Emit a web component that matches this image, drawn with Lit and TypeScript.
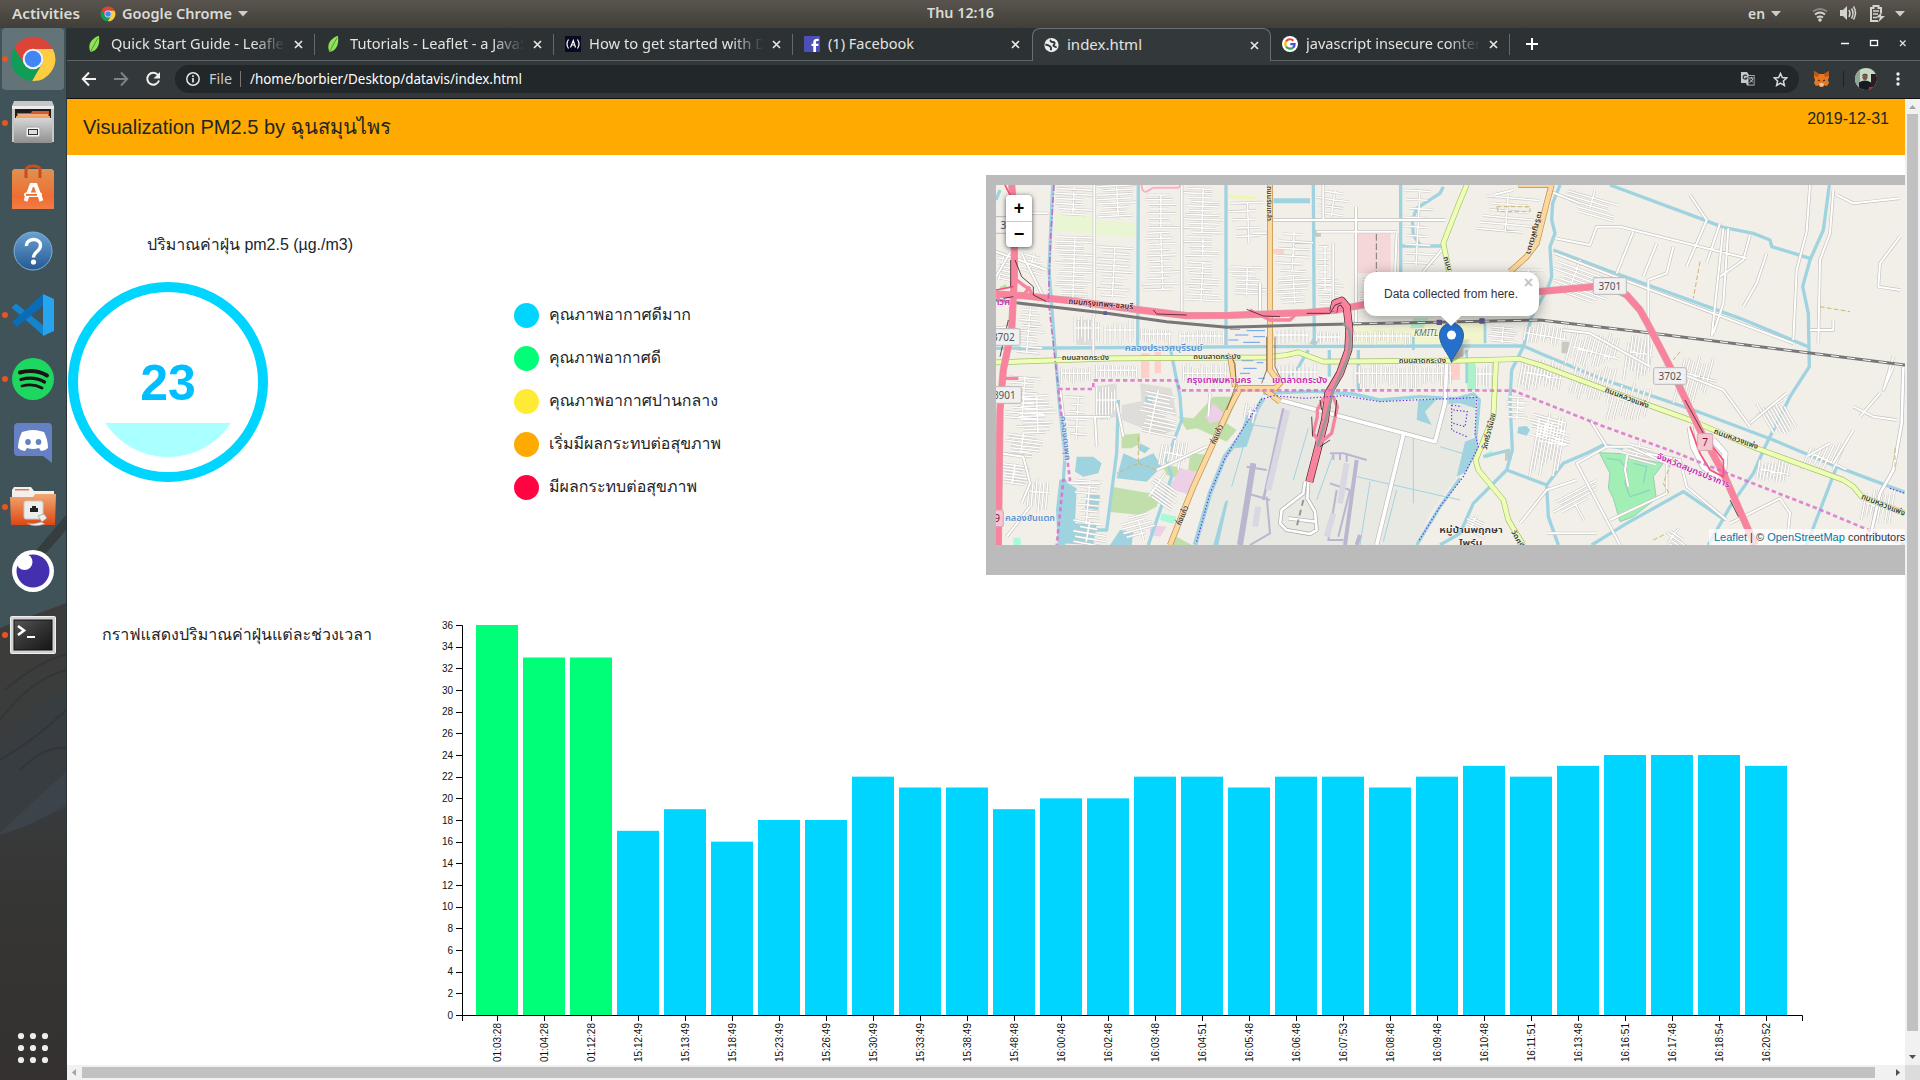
import { LitElement, html, svg, css } from "lit";
import { customElement } from "lit/decorators.js";

/* Text drawn on one line at a fixed advance width. */
const UI = "'Noto Sans','Open Sans',sans-serif";
const fit = (t: string, w: number, size: number, fill = "#e3e3e0", weight = 400, family = UI, h = 20, base = 15) => html`
  <svg width=${w} height=${h} style="display:block;overflow:visible;flex:none">
    <text x="0" y=${base} textLength=${w} lengthAdjust="spacingAndGlyphs" font-size=${size} fill=${fill} font-weight=${weight} font-family=${family}>${t}</text>
  </svg>`;
const THAI = "'Liberation Sans','Loma','Noto Sans Thai',sans-serif";

const chromeLogo = (s: number) => html`<svg width=${s} height=${s} viewBox="0 0 48 48">
  <path fill="#db4437" d="M24 14H43.8A22 22 0 0 0 5 12.8L15.3 29A10 10 0 0 1 24 14z"/>
  <path fill="#ffcd40" d="M24 14H43.8A22 22 0 0 1 23 46L32.7 29A10 10 0 0 0 24 14z"/>
  <path fill="#0f9d58" d="M5 12.8A22 22 0 0 0 23 46L32.7 29A10 10 0 0 1 15.3 29z"/>
  <circle cx="24" cy="24" r="10.3" fill="#f4f4f4"/><circle cx="24" cy="24" r="8.3" fill="#4285f4"/></svg>`;

const leaf = html`<svg width="16" height="18" viewBox="0 0 16 18"><path d="M11.800 .8C3.500 4 .5 10 3.500 17c7-1 10-8 8.300-16.200z" fill="#8fe257"/><path d="M11 3C8 8 6 12 3.500 17" stroke="#4d9c2b" fill="none"/></svg>`;
const fcc = html`<svg width="16" height="16" viewBox="0 0 16 16"><rect width="16" height="16" fill="#0a0a23"/><path d="M3.500 3.500Q0.500 8 3.500 12.500M12.500 3.500Q15.500 8 12.500 12.500M5.500 11.500L8.300 4.500L10.500 11.500M6.700 9h2.500" stroke="#fff" stroke-width="1.200" fill="none"/></svg>`;
const fb = html`<svg width="16" height="16" viewBox="0 0 16 16"><rect width="16" height="16" fill="#4c4fb3"/><path d="M12 16V10h2.200l.4-2.300H12V6.300c0-.9.4-1.400 1.400-1.400h1.300V2.800C12 2.300 9.300 3 9.300 5.900v1.800H7.500V10h1.800v6z" fill="#fff"/></svg>`;
const globe = html`<svg width="15" height="16" viewBox="0 0 16 16"><circle cx="8" cy="8" r="7.600" fill="#eee"/><path d="M7.500 2.500C6 4 8 5 9.500 4.800c1.500 0 2.500 1 1.500 2.200S9.500 9 11 9.500s2 .5 1.500 1.500M1.500 7.500C4 8 5.500 8.500 6.500 9.500S8 12 7 13.500" fill="none" stroke="#33393b" stroke-width="2"/></svg>`;
const google = html`<svg width="16" height="16" viewBox="0 0 16 16"><circle cx="8" cy="8" r="8" fill="#fff"/><g fill="none" stroke-width="2.200"><path d="M4 5.500A4.700 4.700 0 0 1 11.400 4.700" stroke="#ea4335"/><path d="M4 5.500A4.700 4.700 0 0 0 4 10.500" stroke="#fbbc05"/><path d="M4 10.500A4.700 4.700 0 0 0 11 11.600" stroke="#34a853"/><path d="M11 11.600A4.500 4.500 0 0 0 12.600 8.200H8.300" stroke="#4c50d8"/></g></svg>`;
const closeX = html`<svg class="x" width="9" height="9" viewBox="0 0 9 9"><path d="M1 1l7 7M8 1L1 8" stroke="#e6e6e3" stroke-width="1.700"/></svg>`;

const DOCK = [
  { run: true, active: true, icon: chromeLogo(48) },
  { run: true, icon: html`<svg width="46" height="48" viewBox="0 0 46 48"><defs><linearGradient id="fg" x2="0" y2="1"><stop stop-color="#d6d6d6"/><stop offset="1" stop-color="#8f8f8f"/></linearGradient></defs>
    <path d="M4 2h38l2 5v36H2V7z" fill="#c7c7c7"/><path d="M2 7h42v3H2z" fill="#ededed"/><rect x="5" y="10" width="36" height="10" fill="#1d1d1d"/><path d="M7 14h14l1-2h17v9H7z" fill="#d55c26"/><path d="M6 17h34v4H6z" fill="#f4a35f"/><path d="M8 15.500h30v1H8z" fill="#fff"/><path d="M4 19h38v25H4z" fill="url(#fg)"/><rect x="16" y="28" width="14" height="10" rx="2" fill="#f2f2f2" stroke="#aaa"/><rect x="18.500" y="30.500" width="9" height="5" fill="#ddd" stroke="#333"/></svg>` },
  { icon: html`<svg width="44" height="46" viewBox="0 0 44 46"><defs><linearGradient id="sg" x2="0" y2="1"><stop stop-color="#df9152"/><stop offset=".7" stop-color="#f06d31"/><stop offset="1" stop-color="#f37c46"/></linearGradient></defs>
    <path d="M1 7l2-2h38l2 2v38H1z" fill="url(#sg)"/><path d="M15 14V6q0-4 7-4t7 4v8" fill="none" stroke="#cc4c1c" stroke-width="3"/><path d="M14.500 37L20.500 21h4l6 16" fill="none" stroke="#fff" stroke-width="4"/><rect x="13" y="28.500" width="18" height="4.500" rx="2" fill="#fff"/><rect x="15" y="30" width="11" height="1.800" fill="#ee6b2e"/></svg>` },
  { icon: html`<svg width="42" height="42" viewBox="0 0 42 42"><defs><linearGradient id="hg" x2="0" y2="1"><stop stop-color="#6ba0d3"/><stop offset="1" stop-color="#235a91"/></linearGradient></defs><circle cx="21" cy="21" r="19" fill="url(#hg)" stroke="#7fb0dc"/><path d="M14.500 16c-1-8 14-9 14-.5 0 6-7 6-7 12" fill="none" stroke="#fff" stroke-width="3.400"/><circle cx="21.500" cy="32" r="2.600" fill="#fff"/></svg>` },
  { run: true, icon: html`<svg width="42" height="42" viewBox="0 0 42 42"><path d="M0 13l4-3.500 28 22.500v10L0 14z" fill="#1385cf"/><path d="M0 28L31 0 32 11 5 33z" fill="#0b6bb5"/><path d="M31 0l11 5v32l-11 5z" fill="#27a4ee"/></svg>` },
  { run: true, icon: html`<svg width="42" height="42" viewBox="0 0 42 42"><circle cx="21" cy="21" r="21" fill="#1ed760"/><g fill="none" stroke="#191414" stroke-linecap="round"><path d="M8 14.500q15-4 27 3" stroke-width="4"/><path d="M9 21.500q13-3.500 23.500 2.500" stroke-width="3.300"/><path d="M10 28q11-3 20 2" stroke-width="2.800"/></g></svg>` },
  { icon: html`<svg width="38" height="42" viewBox="0 0 38 42"><path d="M4 1h30q4 0 4 4v36l-9-7H4q-4 0-4-4V5q0-4 4-4z" fill="#6680c4"/><path d="M12 9q7-2 14 0l4 1q4 8 4 16-3 3-7 3l-2-3q-6 2-12 0l-2 3q-4 0-7-3 0-8 4-16z" fill="#fff"/><ellipse cx="14" cy="20" rx="2.800" ry="3" fill="#6680c4"/><ellipse cx="24.500" cy="20" rx="2.800" ry="3" fill="#6680c4"/></svg>` },
  { run: true, icon: html`<svg width="46" height="42" viewBox="0 0 46 42"><defs><linearGradient id="dg" x2="0" y2="1"><stop stop-color="#f2a873"/><stop offset="1" stop-color="#dd4814"/></linearGradient></defs><path d="M2 4l2-3h17l3 4h20v20H2z" fill="#f3efec"/><path d="M5 3h14v1.500H5z" fill="#e07a45"/><path d="M0 11h23l2-3h21l-1 31H1z" fill="url(#dg)"/><rect x="14" y="15" width="19" height="18" rx="2" fill="#ededeb" stroke="#c9c9c9"/><path d="M20 26v-4h2v-2h4v2h2v4z" fill="#222"/><path d="M28 30l6-2 3 4-5 4zM31 36q-8 3-14 1 6 5 18 1" fill="#eee" stroke="#999" stroke-width=".7"/></svg>` },
  { icon: html`<svg width="42" height="42" viewBox="0 0 42 42"><circle cx="21" cy="21" r="21" fill="#fff"/><circle cx="21" cy="21" r="16.500" fill="#442fae"/><circle cx="12.500" cy="12" r="8" fill="#fff"/></svg>` },
  { run: true, icon: html`<svg width="46" height="38" viewBox="0 0 46 38"><defs><linearGradient id="tg" x2="1" y2="1"><stop stop-color="#555"/><stop offset=".5" stop-color="#333"/><stop offset="1" stop-color="#151515"/></linearGradient></defs><rect x=".5" y=".5" width="45" height="37" rx="1" fill="#d2d2d2" stroke="#eee"/><rect x="4" y="4" width="38" height="30" fill="url(#tg)" stroke="#111"/><path d="M8 10l6 4.500-6 4.500" fill="none" stroke="#fff" stroke-width="2.600"/><path d="M17 21h8" stroke="#fff" stroke-width="2"/></svg>` },
];

/* Readings: [time, value] */
const DATA: [string, number][] = [
  ["01:03:28", 36], ["01:04:28", 33], ["01:12:28", 33], ["15:12:49", 17], ["15:13:49", 19], ["15:18:49", 16], ["15:23:49", 18],
  ["15:26:49", 18], ["15:30:49", 22], ["15:33:49", 21], ["15:38:49", 21], ["15:48:48", 19], ["16:00:48", 20], ["16:02:48", 20],
  ["16:03:48", 22], ["16:04:51", 22], ["16:05:48", 21], ["16:06:48", 22], ["16:07:53", 22], ["16:08:48", 21], ["16:09:48", 22],
  ["16:10:48", 23], ["16:11:51", 22], ["16:13:48", 23], ["16:16:51", 24], ["16:17:48", 24], ["16:18:54", 24], ["16:20:52", 23],
];
const LEGEND: [string, string, number][] = [
  ["#00d5ff", "คุณภาพอากาศดีมาก", 142], ["#00ff78", "คุณภาพอากาศดี", 112], ["#ffeb33", "คุณภาพอากาศปานกลาง", 169],
  ["#ffaa00", "เริ่มมีผลกระทบต่อสุขภาพ", 172], ["#ff0440", "มีผลกระทบต่อสุขภาพ", 148],
];

/* Blocks of side streets: x, y, width, height, angle, spacing */
type Block = [number, number, number, number, number, number];
const STREETS: Block[] = [
  [225, 55, 115, 75, 3, 15], [350, 50, 120, 95, -3, 13], [485, 75, 115, 100, 0, 14], [610, 55, 120, 130, 2, 13], [225, 200, 120, 185, 2, 13],
  [350, 230, 110, 150, 3, 18], [485, 190, 115, 170, -2, 17], [610, 200, 118, 60, 1, 14], [610, 275, 118, 120, 3, 16], [745, 100, 115, 120, -2, 25], [745, 290, 115, 90, 2, 13],
  [885, 190, 115, 110, 3, 22], [885, 320, 110, 80, -3, 13], [1010, 60, 110, 80, 8, 22], [1010, 230, 50, 130, 0, 19], [1010, 330, 90, 70, 3, 14],
  [50, 250, 45, 80, 12, 12], [125, 250, 75, 60, 15, 16], [110, 400, 85, 150, 5, 16], [285, 440, 75, 85, 90, 10], [375, 450, 90, 75, 90, 15],
  [485, 470, 90, 55, 90, 12], [600, 480, 130, 45, 90, 13], [245, 590, 90, 50, 90, 12], [350, 585, 120, 40, 90, 12], [610, 580, 130, 75, 90, 14],
  [885, 475, 100, 50, 90, 12], [1010, 485, 70, 40, 90, 11], [885, 580, 130, 65, 90, 12], [1125, 580, 290, 75, 90, 13], [1120, 480, 170, 45, 90, 13],
  [1135, 330, 110, 70, -3, 14], [1270, 60, 100, 230, 3, 27],
  [75, 620, 120, 120, 4, 15], [110, 680, 120, 110, -2, 10], [70, 790, 120, 60, 7, 10], [60, 880, 90, 60, 8, 9], [150, 920, 60, 110, 95, 11],
  [255, 680, 80, 130, 3, 22], [350, 650, 60, 100, 90, 9], [480, 660, 110, 130, 12, 12], [550, 810, 80, 90, 100, 12], [510, 910, 90, 70, 35, 11], [285, 930, 90, 130, 5, 18],
  [280, 1050, 100, 65, 10, 16], [425, 1050, 100, 60, -15, 14], [800, 700, 30, 60, 100, 14],
  [1755, 60, 180, 55, 16, 13], [1490, 75, 190, 110, 5, 20], [1720, 270, 160, 90, 20, 12], [1590, 300, 110, 60, 0, 9], [1640, 460, 120, 70, 100, 12], [1780, 490, 140, 100, 105, 14],
  [1950, 490, 70, 140, 98, 10], [2120, 550, 90, 150, 105, 14], [1630, 570, 120, 90, 100, 10], [1790, 590, 120, 110, 105, 15], [1910, 640, 110, 110, 105, 18],
  [1680, 740, 80, 180, 100, 10], [1650, 730, 120, 70, 15, 9], [1490, 580, 65, 80, 90, 10], [1520, 470, 100, 50, 5, 13], [2330, 700, 80, 90, 60, 11],
  [2340, 870, 90, 70, 100, 10], [1720, 1000, 130, 50, -28, 13], [1455, 1035, 70, 45, 25, 8], [2500, 820, 100, 80, 115, 16], [2660, 960, 90, 100, 100, 12],
  [2060, 1075, 70, 45, 35, 13], [1920, 815, 120, 45, 15, 10], [1580, 680, 70, 70, 4, 15],
];
const streetPath = (b: Block) => {
  const [x, y, w, h, a, s] = b, vert = a > 45;
  let d = "", k = 1;
  const slope = Math.tan(((vert ? a - 90 : a) * Math.PI) / 180);
  const span = vert ? w : h, len = vert ? h : w;
  for (let i = 0; i <= span; i += s) {
    k = (k * 37 + 11 + x) % 101;
    const l0 = (k % 5) * len * 0.05, l1 = len * (0.72 + (k % 4) * 0.09);
    d += vert ? `M${x + i - slope * l0} ${y + l0}L${x + i - slope * l1} ${y + l1}` : `M${x + l0} ${y + i + slope * l0}L${x + l1} ${y + i + slope * l1}`;
  }
  d += vert ? `M${x} ${y + h * 0.4}l${w} ${slope * w}` : `M${x + w * 0.5} ${y}l${-slope * h} ${h}`;
  return d;
};
const SIDE_STREETS = STREETS.map(streetPath).join("");
const MAJOR_STREETS = "M343 45V440M605 45V445M1128 110V470M880 150H1395M1010 185H1250M125 250L200 400M95 240L48 320M1030 45V150M340 440V570M840 340V440M1060 220V390M820 190H860M48 245L200 300M240 655L250 740H390M690 670L685 740M125 1000L150 940L130 860L60 850M270 940H360M350 830L345 740M430 800L410 700M680 830L530 900M1540 75L1600 60M1725 205L1830 225L1850 170L1920 170L2300 265M1960 185L1910 310M2030 220L1990 320M2080 230L2060 310L2005 330V590M2230 175L2195 500M2245 175L2230 400L2200 490M2310 195L2290 270L2220 320M2360 250L2330 340L2290 410M2130 75L2180 150L2120 290M2220 160L2180 280M2490 45L2480 185L2450 300L2440 510M2560 60L2550 190L2520 270L2515 520M2570 75L2620 100L2760 85M2760 200L2700 280L2695 350L2760 360M1700 60L1800 100M1750 480L1830 490L2010 590M2050 590L2230 660L2310 770M2420 670L2310 760M2560 450V480H2490M2740 560L2710 660L2740 590M2640 740L2700 670M2620 710L2680 740L2750 750M1830 750L1880 830L1790 880L1920 1125M1880 830L1950 830L2060 880L2060 970L1890 1050M2000 850L2100 870L2120 950L2240 1050M1620 1060L1700 960L1790 930M1700 1090L1850 1090M2250 1060L2400 985L2430 1030L2420 1125M2480 860L2550 820M2560 880L2620 780M48 475L90 470M130 130H205M80 1100L150 1010M1725 250L1880 310L2200 430L2440 520M1385 240L1330 305M1250 190L1245 310";

const lbl = (t: string, x: number, y: number, w: number, rot: number, fill: string, size = 24) => svg`
  <text transform="translate(${x} ${y}) rotate(${rot})" textLength=${w} lengthAdjust="spacingAndGlyphs" font-size=${size} font-weight="600" fill=${fill}
    stroke="#fff" stroke-opacity=".6" stroke-width="3" paint-order="stroke" font-family="'Noto Sans Thai','Noto Sans',sans-serif">${t}</text>`;
const shield = (t: string, x: number, y: number, w: number, red = false) => svg`
  <rect x=${x} y=${y} width=${w} height="50" rx="5" fill=${red ? "#f3c6d0" : "#f0f0f0"} stroke=${red ? "#dfa1b0" : "#b9b9b9"} stroke-width="3"/>
  <text x=${x + w / 2} y=${y + 36} text-anchor="middle" font-size="30" font-family="'Noto Sans',sans-serif" fill=${red ? "#8b0a3a" : "#555"}>${t}</text>`;
const road = (d: string, fill: string, edge: string, w: number) => svg`<path d=${d} stroke=${edge} stroke-width=${w + 4}/><path d=${d} stroke=${fill} stroke-width=${w}/>`;

const mapArt = html`<svg class="tiles" width="909" height="360" viewBox="48 45 2727 1080">
  <rect x="48" y="45" width="2727" height="1080" fill="#f2efe9"/>
  <path d="M225 130L340 140V190L225 185zM345 150L470 160V202L345 195z" fill="#e9f5d3"/><path d="M745 75L830 80V87L745 84z" fill="#eef7a8"/>
  <path d="M1132 188H1232V310H1132z" fill="#f5d7d8"/><path d="M1189 192V310" stroke="#777" stroke-width="3" stroke-dasharray="20 8"/>
  <path d="M345 650L410 640V740L360 750zM425 705L500 690L590 780L540 795L425 750zM480 640L575 655L590 740L485 700zM290 450H335V525H290z" fill="#dfddd9"/>
  <path d="M483 550H508V625H483zM524 545H543V610H524zM877 237H912V251H877zM1410 583H1440V630H1410zM1427 575H1437V600H1427z" fill="#ffcfca"/>
  <path d="M1125 470H1290V523H1125zM1290 462H1510V523H1290z" fill="#f2f5cc"/><path d="M1300 445H1345L1330 475H1290z" fill="#b7eccc"/>
  <path d="M1462 580H1487V660H1462z" fill="#abf2cb"/>
  <path d="M1000 500l18 10-10 16-20-4zM1005 180h18v20h-18zM1575 845h20v22l-20 6zM1745 515h22v35h-22zM1410 530h40v32h-40z" fill="#cbc8c4"/>
  <path d="M840 690L970 672L1110 682L1200 697L1320 688H1490L1480 790L1425 930L1350 1030L1310 1125H640L690 960L750 830z" fill="#e9e9e4"/>
  <path d="M595 740L640 745L700 680L775 680L740 760L770 780L740 815L650 775L620 780zM425 795L480 790V820L455 835H425zM395 950L540 975L530 1010L480 1035L385 1025zM545 880L605 895L600 925L560 915zM630 850L690 855L665 910L625 900zM570 1125L590 1100L635 1125zM60 350l18-8 4 14H60z" fill="#c0dfab"/>
  <path d="M700 700L745 745L690 760L675 740zM600 895L650 905L630 975L565 955zM510 1065L560 1070L540 1100L510 1095z" fill="#edd0e7"/><path d="M545 1030L590 1040L580 1062L540 1050zM100 1103h22v22h-22zM1515 850l20-8 6 12-22 12z" fill="#a8fbd6"/>
  <path d="M1858 848L1945 852L1995 870L2050 880L2020 920L2029 985L1960 1040L1920 1055L1900 985L1885 955L1890 910z" fill="#a2efb6" stroke="#93cfb0" stroke-width="3"/>
  <path d="M1880 865l40 5 20 30-5 40 15 40 60-20M1960 880l40 10-10 50" fill="none" stroke="#8fd3c0" stroke-width="4"/>
  <g fill="#a0d3e0"><path d="M290 860H340L365 880L355 910L310 920L285 905zM495 680L520 685L515 705L498 702zM430 850L475 870L520 850L545 890L500 935L410 925zM320 975H360L355 1020L315 1015zM390 1125L420 1080L460 1085L455 1125zM255 935L290 955L285 1060L350 1065L340 1125L240 1120zM800 735L845 695L800 830L765 835zM1315 690L1370 688L1335 725L1355 765L1310 750zM1405 685L1488 680L1486 715L1440 700L1405 702zM1455 815L1492 800L1494 840L1460 905L1430 920z"/><path d="M880 85H990V100H880zM480 820L510 835L495 850L475 840zM1615 770L1640 768L1650 780L1640 797L1612 790zM735 995L745 990L715 1125H700z"/></g>
  <g fill="none" stroke="#a0d3e0" stroke-width="10" stroke-linejoin="round">
    <path d="M218 45L207 300L225 540L240 720L255 860L250 930"/><path d="M250 930L240 1020L245 1125" stroke-width="24"/>
    <path d="M475 45L473 530M738 45V525M1000 45L1003 530M1262 45V310"/>
    <path d="M48 535L860 530L1440 528L1630 528L1680 550L1860 625L2140 720L2380 810L2570 890L2775 967"/>
    <path d="M1390 50L1380 70L1310 115L1297 150L1300 195L1320 225M1265 228H1395"/>
    <path d="M572 540L600 680L605 750L560 870L575 920L520 1080L505 1125M415 690L410 850L380 1080H260M985 540L950 600L905 640M1135 540V660M1048 540V620M48 90L60 60"/>
    <path d="M1740 45L1718 100L1715 150L1725 190L1710 230L1715 320L1705 350L1655 440L1630 530L1595 600L1590 690L1597 840L1580 900L1480 1000L1440 1090L1380 1125"/>
    <path d="M1890 45L2160 145L2230 172L2320 190L2370 210L2375 230L2490 265M2548 45L2530 180L2490 270L2468 350L2485 430L2488 590L2430 680L2355 830L2320 910L2250 1010L2185 1125"/>
    <path d="M1720 240L1880 300L2280 445L2485 530M2570 890L2480 1125M1580 900L1700 945L1705 1040L1735 1125M1700 945L1750 880L1820 850L1870 825L1930 835M1835 1125L1940 1060L2110 965L2235 1050M1590 840L1510 860"/>
    <path d="M850 685L780 800L735 860L690 970L645 1125" stroke-width="14"/><path d="M850 670L1000 664L1120 672L1200 690L1320 680L1430 686"/>
    <path d="M1430 686L1480 672L1498 690L1488 800M1440 925L1380 1010L1310 1125"/><path d="M1300 540V500M1460 540V640M1515 450V520" stroke-width="8"/>
  </g>
  <g fill="none" stroke="#a0d3e0" stroke-width="3"><path d="M820 765L890 775M790 830L755 950M985 775L940 930M1130 920L1440 990M1300 800V1000M1170 935L1140 1125M1250 960L1210 1115M1380 830L1480 860M1060 850L1010 990"/></g>
  <g stroke="#4a90f0" stroke-width="2.500"><path d="M750 478h30M800 482h55M765 495h40M820 500h35M745 510h30M790 517h50M785 572h35M830 578h20M790 595h40M780 610h30M835 625h20"/></g>
  <g fill="none" stroke-linejoin="round">
    <path d=${SIDE_STREETS} stroke="#cbc8c3" stroke-width="8"/><path d=${SIDE_STREETS} stroke="#fff" stroke-width="4.500"/>
    <path d=${MAJOR_STREETS} stroke="#c6c3be" stroke-width="10"/><path d=${MAJOR_STREETS} stroke="#fff" stroke-width="6"/>
    <g stroke="#bbb5cf"><path d="M820 880L780 1125" stroke-width="18"/><path d="M910 715L850 990" stroke-width="8"/><path d="M1130 870L1095 1125M1140 1095L1130 1125" stroke-width="12"/><path d="M1050 850H1090L1160 870M1060 850V870M1080 850V870M1100 855V875M1050 940L1110 960M860 980L870 1090L810 1125M800 890L860 900M800 970L870 990M1070 960L1045 1110H1090M1110 960L1075 1100" stroke-width="6"/></g>
    <g stroke="#dad7e2" stroke-width="18"><path d="M922 720L865 960M1100 880L1080 1000M1040 1100L1060 1030M835 1010L825 1070"/></g>
    ${road("M900 690L1365 815L1395 700L1400 580M1270 795L1190 1125", "#fff", "#bbb", 11)}
    ${road("M2770 590L2765 760L2740 900L2700 970L2665 1125", "#fff", "#bbb", 8)}
    ${road("M975 935L970 970L905 1020L900 1060L920 1080L990 1092L1010 1080L1005 1025L982 985L985 935M925 1045L1005 1055", "#fff", "#aaa", 8)}
    ${road("M2130 770L2140 830L2170 890L2215 925M2200 810L2235 850L2230 920", "#fff", "#bbb", 16)}
    <path d="M1942 860L1935 900L1945 950" stroke="#bbb" stroke-width="9"/><path d="M1942 855L1935 900L1945 950" stroke="#fff" stroke-width="6"/>
    <path d="M970 990L950 1070" stroke="#999" stroke-width="6" stroke-dasharray="18 12"/>
    ${road("M48 577L400 565L860 562L920 555L955 547L1030 575L1440 572L1620 567L1680 585L1880 660L2130 750L2330 835L2590 930L2620 950L2645 980L2775 1030M1460 45L1437 100L1390 220L1407 305M1548 575L1540 740L1487 870L1495 900L1570 990L1585 1050L1630 1125", "#ecffb5", "#a9bf72", 13)}
    ${road("M870 45V600L900 640L885 655H780L745 720L640 950L570 1125M750 555L765 650M850 655L900 695M1715 45L1700 100L1670 220L1640 260L1590 305M1615 45H1715", "#fcd79f", "#b98f45", 14)}
    <path d="M745 550L765 580L768 645L740 720M860 500V600L845 640M885 500V590L902 625" stroke="#7d5b30" stroke-width="2.500"/>
    <path d="M48 390L100 397L380 430L560 455L740 472L1000 464L1440 455L1680 450L1980 485L2775 585" stroke="#777" stroke-width="9"/>
    <path d="M1120 461L1440 455L1680 450L1980 485L2775 585" stroke="#fff" stroke-width="3" stroke-dasharray="24 24"/>
    ${road("M95 45L103 130V320L95 480L70 600L60 720L55 1125M48 372L130 377L270 392L480 420L620 437L750 436L980 428L1070 420L1155 403L1600 368L1677 365L1840 350L1900 355L1940 375L1980 420L2005 465L2070 590L2160 780L2230 910L2325 1125", "#f9839d", "#e0a0ac", 18)}
    <path d="M103 325L150 360L160 385L200 388M150 350L130 375H70L50 385M65 625H115" stroke="#f9839d" stroke-width="10"/>
    <path d="M75 45L103 100M48 360L100 350M2130 770L2160 850L2190 900L2230 920V870L2190 820" stroke="#fa4f78" stroke-width="5"/>
    ${road("M1060 425L1065 400L1085 392L1100 410L1108 480L1105 540L1080 610L1045 670L1035 750L1015 830L988 935", "#f9839d", "#40272e", 20)}
    <path d="M1030 685L1012 720V740L1000 790L1020 820M1060 680L1072 710L1055 790L1025 815M820 425L870 450H930L950 430M810 420L840 440" stroke="#f9839d" stroke-width="10"/>
    <path d="M1090 460L1108 480L1110 510L1105 560L1060 660L1040 740L1013 830" stroke="#999" stroke-width="8"/>
    <path d="M105 270L125 320L160 350V375L200 395M100 380L70 385M520 420L530 432L620 435M800 418L850 438L900 440M980 430H1050L1065 405L1085 398M92 270V350M85 450L60 560M2115 690L2170 790M2250 990L2275 1040M1020 690L1025 720M995 740L998 800M1070 690L1065 740M1050 810L1020 830" stroke="#40272e" stroke-width="2.500"/>
    <path d="M485 45Q485 68 500 65L520 53H595L602 45" stroke="#f9b3c2" stroke-width="6"/>
    <path d="M222 45L212 200L205 390L235 655" stroke="#c54fbd" stroke-opacity=".75" stroke-width="5" stroke-dasharray="18 7 4 7"/>
    <path d="M235 657H340V631H590L600 661H1440L1600 662L1860 765L2080 845L2280 925L2510 1015L2690 1090L2775 1125M235 660L270 930H250L230 1125" stroke="#d86cca" stroke-opacity=".8" stroke-width="8" stroke-dasharray="13 9"/>
    <path d="M650 1115L690 970L735 865L780 790L845 688L880 677L975 685L1090 677L1200 695L1300 690L1440 685L1490 682L1485 790L1495 830L1450 920L1380 1010L1315 1115M1415 705L1445 710M1415 705V780L1460 800M1420 720L1462 725L1455 770L1420 760M2730 955L2775 970" stroke="#6a2be6" stroke-width="3.500" stroke-dasharray="4 6"/>
    <path d="M1550 110H1650V125H1555zM2160 275L2140 385M2520 410L2610 425M2080 860L2050 940L2070 975M475 800V880L410 910M475 880L530 900M2020 1110L2060 1090M2100 545L2080 570M2745 835V900" stroke="#d0b36e" stroke-width="3" stroke-dasharray="14 7"/>
  </g>
  <path d="M370 424h11v11h-11zM1370 449h16v16h-16zM1498 445h16v16h-16z" fill="#675a9d"/>
  ${lbl("ถนนกรุงเทพฯ-ชลบุรี", 265, 401, 195, 5, "#4a1525")}
  ${lbl("ถนนลาดกระบัง", 245, 570, 142, 0, "#3b3b30", 22)}${lbl("ถนนลาดกระบัง", 640, 568, 142, 0, "#3b3b30", 22)}${lbl("ถนนลาดกระบัง", 1256, 579, 142, 0, "#3b3b30", 22)}
  ${lbl("คลองประเวศบุรีรมย์", 434, 542, 234, 0, "#5a8fce", 28)}
  ${lbl("กรุงเทพมหานคร", 620, 638, 194, 0, "#c82bb3", 27)}${lbl("เขตลาดกระบัง", 876, 638, 166, 0, "#c82bb3", 27)}
  ${lbl("คลองตาพุก", 241, 738, 135, 84, "#5a8fce", 24)}${lbl("คลองขันแตก", 75, 1054, 150, 0, "#5a8fce", 28)}${lbl("เวศ", 50, 405, 40, 0, "#c82bb3", 25)}
  ${lbl("ถนนร่มเกล้า", 862, 48, 105, 90, "#4a3518", 22)}${lbl("กิ่งแก้ว", 706, 825, 62, -67, "#4a3518", 24)}${lbl("กิ่งแก้ว", 602, 1068, 62, -67, "#4a3518", 24)}
  ${lbl("ถนน", 1390, 262, 44, 72, "#3b3b30", 22)}${lbl("เจริญพัฒนา", 1675, 122, 134, 106, "#4a3518", 22)}
  ${lbl("ถนนหลวงแพ่ง", 1873, 665, 140, 21, "#3b3b30", 23)}${lbl("ถนนหลวงแพ่ง", 2200, 790, 140, 20, "#3b3b30", 23)}${lbl("ถนนหลวงแพ่ง", 2642, 985, 140, 22, "#3b3b30", 23)}
  ${lbl("วัดศรีวารีน้อย", 1520, 840, 112, -76, "#3b3b30", 23)}${lbl("วัดศรี", 1593, 1085, 55, 62, "#3b3b30", 22)}
  ${lbl("จังหวัดสมุทรปราการ", 2028, 865, 235, 22, "#c82bb3", 26)}
  ${lbl("หมู่บ้านพฤกษา", 1378, 1088, 190, 0, "#333", 28)}${lbl("ไพร์ม", 1437, 1127, 70, 0, "#333", 28)}
  <text x="1302" y="498" font-size="27" font-style="italic" font-family="'Noto Sans'" fill="#5d6d38" stroke="#fff" stroke-width="3" paint-order="stroke">KMITL</text>
  ${shield("3", 20, 140, 100)}${shield("3702", 20, 476, 100)}${shield("3901", 22, 650, 102)}${shield("9", 33, 1020, 37, true)}
  ${shield("3701", 1840, 323, 99)}${shield("3702", 2021, 593, 98)}${shield("7", 2152, 791, 46, true)}
</svg>`;

@customElement("app-root")
export class AppRoot extends LitElement {
  static styles = css`
    :host { display: block; width: 1920px; height: 1080px; overflow: hidden; font-family: "Liberation Sans", sans-serif; color: #212529; background: #fff; }
    * { box-sizing: border-box; }
    svg { display: block; flex: none; }
    .desktop { display: grid; grid-template: 28px 1052px / 67px 1853px; }
    .panel { grid-column: 1 / 3; display: grid; grid-template-columns: 1fr auto 1fr; align-items: center; background: linear-gradient(#59554e, #403e39); padding: 0 11px 0 12px; }
    .group { display: flex; align-items: center; }
    .group.end { justify-content: flex-end; }
    .dock { position: relative; display: flex; flex-direction: column; background: #3f5359; border-right: 1px solid #2b3436; }
    .wall { position: absolute; left: 0; top: 0; }
    .slot { position: relative; height: 64px; display: flex; align-items: flex-start; padding-left: 2px; }
    .slot .tile { width: 62px; height: 62px; border-radius: 4px; display: flex; align-items: center; justify-content: center; }
    .slot .tile.active { background: #637478; }
    .dot { position: absolute; left: 2px; top: 28px; width: 6px; height: 6px; border-radius: 50%; background: #e95420; }
    .apps { position: relative; margin-top: auto; padding: 0 0 16px 17px; }
    .browser { display: flex; flex-direction: column; min-width: 0; }
    .tabs { height: 33px; background: #2c3134; display: flex; align-items: stretch; padding-left: 9px; border-bottom: 1px solid #5f6567; }
    .tab { width: 239px; display: flex; align-items: center; padding: 0 10px 0 11px; position: relative; }
    .tab .label { margin-left: 8px; width: 178px; overflow: hidden; flex: none; }
    .tab .label.fade { -webkit-mask-image: linear-gradient(90deg, #000 80%, transparent 98%); mask-image: linear-gradient(90deg, #000 80%, transparent 98%); }
    .tab .x { margin-left: 5px; }
    .tab .sep { position: absolute; right: 0; top: 6px; width: 1px; height: 21px; background: #64696b; }
    .tab.on { background: #33393b; border: 1px solid #6a7072; border-bottom: 0; border-radius: 8px 8px 0 0; height: 33px; padding-left: 11px; }
    .plus { margin: 10px 0 0 16px; }
    .win { margin-left: auto; padding: 11px 14px 0 0; }
    .bar { height: 38px; background: #33393b; border-bottom: 1px solid #111; display: flex; align-items: center; padding-bottom: 1px; }
    .omni { width: 1624px; height: 28px; border-radius: 14px; background: #222729; margin-left: 14px; display: flex; align-items: center; padding: 0 11px; }
    .nav { display: flex; gap: 16px; padding-left: 14px; }
    .vline { width: 1px; height: 16px; background: #777; margin: 0 9px 0 8px; }
    .right { display: flex; align-items: center; margin-left: auto; gap: 18px; }
    .view { display: grid; grid-template: 966px 15px / 1838px 15px; }
    .page { background: #fff; overflow: hidden; }
    .head { height: 56px; background: #ffaa00; display: flex; justify-content: space-between; padding: 0 16px; }
    .date { font-size: 16px; line-height: 24px; padding-top: 8px; }
    .mid { display: flex; height: 444px; }
    .gauge { width: 300px; padding: 76px 0 0 1px; }
    .gauge .cap { padding-left: 79px; height: 51px; }
    .legend { width: 619px; padding: 148px 0 0 147px; display: flex; flex-direction: column; gap: 18px; }
    .item { display: flex; align-items: center; gap: 10px; height: 25px; }
    .item i { width: 25px; height: 25px; border-radius: 50%; }
    .mapbox { margin-top: 20px; width: 919px; height: 400px; background: #bbb; padding: 10px 0 0 10px; }
    .map { position: relative; width: 909px; height: 360px; overflow: hidden; }
    .zoom { position: absolute; left: 10px; top: 10px; width: 26px; height: 52px; background: #fff; border-radius: 4px; box-shadow: 0 1px 5px rgba(0, 0, 0, .65); font: bold 18px/26px "Liberation Sans", sans-serif; color: #000; text-align: center; }
    .zoom div + div { border-top: 1px solid #ccc; line-height: 25px; }
    .pin { position: absolute; left: 430px; top: 137px; }
    .pop { position: absolute; left: 368px; top: 87px; width: 175px; height: 44px; background: #fff; border-radius: 12px; box-shadow: 0 3px 14px rgba(0, 0, 0, .4); font-size: 12px; line-height: 44px; padding-left: 20px; color: #333; }
    .pop b { position: absolute; right: 6px; top: 3px; line-height: 16px; font-size: 16px; color: #c3c3c3; }
    .tip { position: absolute; left: 445px; top: 131px; border: 10px solid transparent; border-top-color: #fff; border-bottom: 0; }
    .attr { position: absolute; right: 0; bottom: 0; height: 16px; width: 196px; padding-left: 5px; background: rgba(255, 255, 255, .7); font-size: 11px; line-height: 16px; color: #333; white-space: nowrap; }
    .attr span { color: #0078a8; }
    .low { display: flex; padding: 17px 0 0 35px; }
    .low .title { width: 335px; padding-top: 10px; }
    .plot text { font: 10px "Liberation Sans", sans-serif; fill: #111; }
    .vs, .hs { background: #f1f1f1; display: flex; align-items: center; }
    .vs { flex-direction: column; }
    .vs .thumb { width: 11px; height: 917px; background: #c1c1c1; }
    .hs .thumb { height: 11px; width: 1793px; background: #c1c1c1; }
    .corner { background: #dcdcdc; }
  `;

  private tab(icon: unknown, text: string, w: number, fade: boolean, on = false, sep = true) {
    return html`<div class="tab ${on ? "on" : ""}">${icon}
      <div class="label ${fade ? "fade" : ""}">${fit(text, w, 15)}</div>${closeX}${sep ? html`<div class="sep"></div>` : ""}</div>`;
  }

  private plot() {
    const y = (v: number) => 395 - (v * 390) / 36;
    const ticks = Array.from({ length: 19 }, (_, i) => i * 2);
    return html`<svg class="plot" width="1400" height="446">
      ${DATA.map(([t, v], i) => svg`<rect x=${39 + i * 47} y=${y(v)} width="42" height=${395 - y(v)} fill=${v > 25 ? "#00ff78" : "#00d5ff"}/>
        <path d="M${60.5 + i * 47} 395v6" stroke="#000"/>
        <text transform="translate(${64 + i * 47} 403) rotate(-90)" text-anchor="end">${t}</text>`)}
      <path d="M19 5.500H25.500V395.500M19 395.500H1365.500V401M25.500 395V401" fill="none" stroke="#000"/>
      ${ticks.map((v) => svg`<path d="M19 ${Math.floor(y(v) + 0.5) + 0.5}h6" stroke="#000"/><text x="16" y=${Math.floor(y(v)) + 4} text-anchor="end">${v}</text>`)}
    </svg>`;
  }

  render() {
    const caret = html`<svg width="10" height="6" viewBox="0 0 10 6"><path d="M0 0h10L5 5.500z" fill="#cfcdc8"/></svg>`;
    return html`<div class="desktop">
      <div class="panel">
        <div class="group">${fit("Activities", 68, 14.5, "#dcdad5", 600)}<div style="width:20px"></div>${chromeLogo(16)}<div style="width:6px"></div>
          ${fit("Google Chrome", 110, 14.5, "#dcdad5", 600)}<div style="width:6px"></div>${caret}</div>
        <div class="group">${fit("Thu 12:16", 67, 14.5, "#dcdad5", 600, UI, 20, 14)}</div>
        <div class="group end">${fit("en", 17, 15, "#dcdad5", 600)}<div style="width:6px"></div>${caret}<div style="width:28px"></div>
          <svg width="100" height="20" viewBox="0 0 100 20"><g fill="none" stroke="#d5d3ce" stroke-width="2"><path d="M4 7.500q7-5 14 0" stroke="#8b8883"/><path d="M6 10.500q5-4 10 0" /><path d="M8 13.500q3-2 6 0"/></g><circle cx="11" cy="16" r="1.800" fill="#d5d3ce"/>
            <path d="M31 6h3l4-4v14l-4-4h-3z" fill="#d5d3ce"/><path d="M40 6q2 3.500 0 7M42.500 4.500q3 5 0 10M44.500 2.500q4 6.500 0 13" stroke="#d5d3ce" stroke-width="1.500" fill="none"/>
            <path d="M62 4h2.500V2h5v2H72v5M62 3v14h7" stroke="#d5d3ce" stroke-width="2" fill="none"/><path d="M64 7h6M64 10h5M64 13.500h4" stroke="#d5d3ce" stroke-width="1.500"/><path d="M73 8l-6 5.500h4l-2 5 7-6.500h-4z" fill="#d5d3ce"/><path d="M86 7h10l-5 5.500z" fill="#cfcdc8"/></svg></div>
      </div>
      <div class="dock">
        <svg class="wall" width="66" height="1052" viewBox="0 28 66 1052"><defs><linearGradient id="wl" x2="0" y2="1"><stop stop-color="#3d3c3a"/><stop offset=".35" stop-color="#3a3c3e"/><stop offset=".6" stop-color="#363635"/><stop offset="1" stop-color="#343130"/></linearGradient></defs>
          <path d="M0 628Q25 618 42 612L66 603V1080H0z" fill="url(#wl)"/><path d="M28 560L66 515V530L40 560z" fill="#363d3f"/>
          <path d="M0 745Q30 705 66 690V745Q55 760 66 770V810Q30 822 0 835z" fill="#383d42"/><path d="M0 833Q40 795 66 772V805Q35 825 0 835z" fill="#3c434b"/>
          <g stroke="#333639" stroke-width="2" fill="none"><path d="M0 720Q30 680 66 670M0 760Q35 740 66 710M20 770Q45 745 66 748M5 690Q40 660 66 655"/></g></svg>
        ${DOCK.map((d) => html`<div class="slot">${d.run ? html`<div class="dot"></div>` : ""}<div class="tile ${d.active ? "active" : ""}">${d.icon}</div></div>`)}
        <div class="apps"><svg width="32" height="32" viewBox="0 0 32 32">${[4, 16, 28].map((a) => [4, 16, 28].map((b) => svg`<circle cx=${a} cy=${b} r="3.100" fill="#eee"/>`))}</svg></div>
      </div>
      <div class="browser">
        <div class="tabs">
          ${this.tab(leaf, "Quick Start Guide - Leaflet", 178, true)}
          ${this.tab(leaf, "Tutorials - Leaflet - a JavaS", 178, true)}
          ${this.tab(fcc, "How to get started with D", 177, true)}
          ${this.tab(fb, "(1) Facebook", 86, false, false, false)}
          ${this.tab(globe, "index.html", 75, false, true, false)}
          ${this.tab(google, "javascript insecure conten", 178, true)}
          <svg class="plus" width="12" height="12" viewBox="0 0 12 12"><path d="M6 0v12M0 6h12" stroke="#fff" stroke-width="2"/></svg>
          <svg class="win" width="80" height="20" viewBox="0 0 66 9"><path d="M1 4.500h8" stroke="#fff" stroke-width="1.500"/><rect x="30.500" y="1.500" width="7" height="5" fill="none" stroke="#fff" stroke-width="1.300"/><path d="M60 1.500l5.500 5.500M65.500 1.500L60 7" stroke="#ddd" stroke-width="1.300"/></svg>
        </div>
        <div class="bar">
          <div class="nav">
            <svg width="16" height="16" viewBox="0 0 16 16"><path d="M15 8H2M8 1.500L1.800 8 8 14.500" stroke="#f0f0ee" stroke-width="2" fill="none"/></svg>
            <svg width="16" height="16" viewBox="0 0 16 16"><path d="M1 8h13M8 1.500L14.200 8 8 14.500" stroke="#7d8283" stroke-width="2" fill="none"/></svg>
            <svg width="16" height="16" viewBox="0 0 16 16"><path d="M13 4A6 6 0 1 0 14 9.500" stroke="#f0f0ee" stroke-width="2" fill="none"/><path d="M15 1v6.500H8.500z" fill="#f0f0ee"/></svg>
          </div>
          <div class="omni">
            <svg width="14" height="14" viewBox="0 0 14 14"><circle cx="7" cy="7" r="6.200" fill="none" stroke="#e6e6e3" stroke-width="1.500"/><path d="M7 6v4.500M7 3.300v1.700" stroke="#e6e6e3" stroke-width="1.700"/></svg>
            <div style="width:9px"></div>${fit("File", 23, 15, "#c9cccd")}<div class="vline"></div>${fit("/home/borbier/Desktop/datavis/index.html", 272, 15, "#fff")}
            <div class="right">
              <svg width="14" height="14" viewBox="0 0 14 14"><path d="M0 0h6l2 3h5.500v10.500H6L5 11H0z" fill="#c6c8c9"/><path d="M5.800 4A2 2 0 1 0 6 6H4.200" fill="none" stroke="#33393b" stroke-width="1.200"/><rect x="7.500" y="3.800" width="5.300" height="8.800" fill="#222729"/><path d="M8 6h4.500M10.300 5v1.500M12 6.500Q11 9.500 8.500 10.500M9 7.500l3 3" stroke="#c6c8c9" fill="none"/></svg>
              <svg width="15" height="15" viewBox="0 0 15 15"><path d="M7.500 1.500l1.800 4.100 4.400.4-3.300 3 1 4.400-3.900-2.300-3.900 2.300 1-4.400-3.300-3 4.400-.4z" stroke="#d8dadb" stroke-width="1.500" fill="none"/></svg>
            </div>
          </div>
          <svg style="margin-left:14px" width="17" height="16" viewBox="0 0 17 16"><path d="M1 0l5 3h5l5-3v6l-1 3 1 3-2 3-3-.7-1 1.700H7l-1-1.700L3 15l-2-3 1-3-1-3z" fill="#e87722"/><path d="M1 0l5 3-1 3-4-1zM16 0l-5 3 1 3 4-1z" fill="#b8591b"/><path d="M6 13l1-1h3l1 1-1 2.500H7z" fill="#d7c1b3"/><path d="M5 9l2 1M12 9l-2 1" stroke="#333" stroke-width="1.200"/></svg>
          <div style="width:1px;height:16px;background:#1d2123;margin:0 11px 0 13px"></div>
          <svg width="22" height="22" viewBox="0 0 22 22"><defs><clipPath id="av"><circle cx="11" cy="11" r="11"/></clipPath></defs><g clip-path="url(#av)"><rect width="22" height="22" fill="#c9d8c2"/><rect width="5" height="22" fill="#8fa596"/><path d="M16 6h6v16h-6z" fill="#2b1d22"/><circle cx="10" cy="9.500" r="2.500" fill="#7b5546"/><path d="M7.500 8.500q2.500-4 5 0V7q-2.500-2.500-5 0z" fill="#111"/><path d="M4 22V14.500q6-4 12 0v7.500z" fill="#171a22"/><path d="M14 19h4v3h-4z" fill="#c0262f"/></g></svg>
          <svg style="margin-left:18px" width="6" height="14" viewBox="0 0 6 14"><g fill="#f0f0ee"><circle cx="3" cy="2" r="1.700"/><circle cx="3" cy="7" r="1.700"/><circle cx="3" cy="12" r="1.700"/></g></svg>
        </div>
        <div class="view">
          <div class="page">
            <div class="head">${fit("Visualization PM2.5 by ฉุนสมุนไพร", 308, 20, "#212529", 400, THAI, 56, 35)}<div class="date">2019-12-31</div></div>
            <div class="mid">
              <div class="gauge">
                <div class="cap">${fit("ปริมาณค่าฝุ่น pm2.5 (µg./m3)", 206, 16, "#212529", 400, THAI, 24, 19)}</div>
                <svg width="200" height="200" viewBox="0 0 200 200"><circle cx="100" cy="100" r="95" fill="none" stroke="#00d5ff" stroke-width="10"/>
                  <path d="M37.200 141H162.800A75 75 0 0 1 37.200 141z" fill="#aff"/>
                  <text x="100" y="118" text-anchor="middle" font-family="Liberation Sans" font-weight="700" font-size="50" fill="#00beff">23</text></svg>
              </div>
              <div class="legend">${LEGEND.map(([c, t, w]) => html`<div class="item"><i style="background:${c}"></i>${fit(t, w, 16, "#212529", 400, THAI, 25, 17)}</div>`)}</div>
              <div class="mapbox"><div class="map">${mapArt}
                <div class="zoom"><div>+</div><div>−</div></div>
                <svg class="pin" width="50" height="41" viewBox="0 0 50 41"><defs><linearGradient id="sh"><stop stop-color="#000" stop-opacity=".5"/><stop offset="1" stop-color="#000" stop-opacity="0"/></linearGradient></defs><path d="M26 40L32 22Q45 12 46 22Q44 32 26 40z" fill="url(#sh)" opacity=".7"/>
                  <path d="M25.500 40.500C23 32 13.500 24 13.500 13A12 12 0 0 1 37.500 13C37.500 24 28 32 25.500 40.500z" fill="#2570cd" stroke="#2a6395"/><circle cx="25.500" cy="13" r="4.500" fill="#fff"/></svg>
                <div class="pop">Data collected from here.<b>×</b></div><div class="tip"></div>
                <div class="attr"><span>Leaflet</span> | © <span>OpenStreetMap</span> contributors</div>
              </div></div>
            </div>
            <div class="low"><div class="title">${fit("กราฟแสดงปริมาณค่าฝุ่นแต่ละช่วงเวลา", 270, 16, "#212529", 400, THAI, 24, 14)}</div><div style="padding-top:4px">${this.plot()}</div></div>
          </div>
          <div class="vs"><svg width="15" height="15"><path d="M4 10h7l-3.500-4z" fill="#a3a3a3"/></svg><div class="thumb"></div><svg style="margin-top:auto" width="15" height="15"><path d="M4 5h7l-3.500 4z" fill="#505050"/></svg></div>
          <div class="hs"><svg width="15" height="15"><path d="M9 4v7L5 7.500z" fill="#a3a3a3"/></svg><div class="thumb"></div><svg style="margin-left:auto" width="15" height="15"><path d="M6 4v7l4-3.500z" fill="#505050"/></svg></div>
          <div class="corner"></div>
        </div>
      </div>
    </div>`;
  }
}
